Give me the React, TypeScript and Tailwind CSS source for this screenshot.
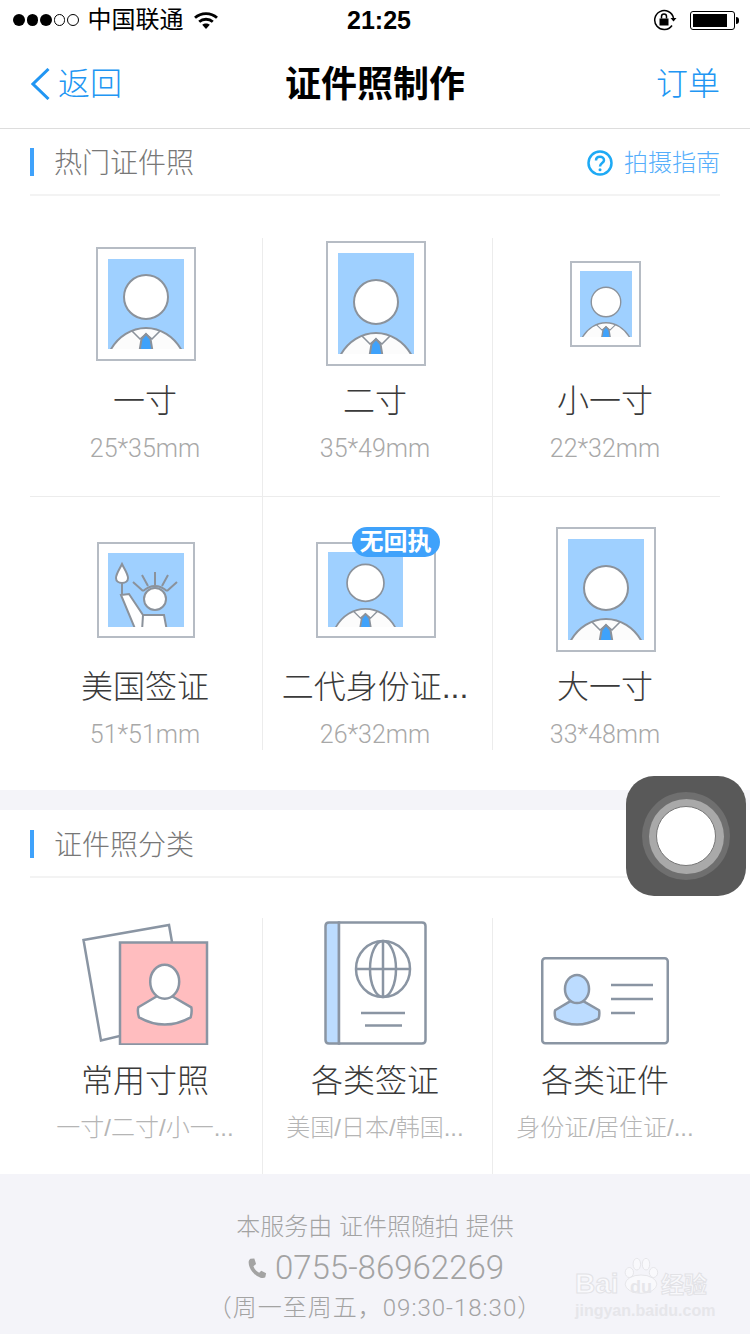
const STROKE = "#8b929b";
const ICON = "#8a95a3";
const CJK_ROBOTO = "[font-family:'Roboto','Noto_Sans_CJK_SC',sans-serif]";

type Photo = {
  name: string;
  size: string;
  frameClass: string;
  blueClass: string;
  vh: number;
  scale: number;
  badge?: boolean;
};

const hotRows: Photo[][] = [
  [
    { name: "一寸", size: "25*35mm", frameClass: "w-[100px] h-[114px]", blueClass: "w-[76px] h-[90px]", vh: 90, scale: 1 },
    { name: "二寸", size: "35*49mm", frameClass: "w-[100px] h-[125px]", blueClass: "w-[76px] h-[101px]", vh: 101, scale: 1 },
    { name: "小一寸", size: "22*32mm", frameClass: "w-[71px] h-[86px] mr-[1px]", blueClass: "w-[52px] h-[66px]", vh: 96, scale: 0.98 },
  ],
  [
    { name: "美国签证", size: "51*51mm", frameClass: "w-[98px] h-[96px]", blueClass: "w-[76px] h-[74px]", vh: 74, scale: 1 },
    { name: "二代身份证...", size: "26*32mm", frameClass: "w-[120px] h-[96px] !justify-start pl-[10px]", blueClass: "w-[75px] h-[75px]", vh: 75, scale: 0.85, badge: true },
    { name: "大一寸", size: "33*48mm", frameClass: "w-[100px] h-[125px]", blueClass: "w-[76px] h-[101px]", vh: 101, scale: 1 },
  ],
];

function Person({ vh, scale }: { vh: number; scale: number }) {
  return (
    <svg viewBox={`0 0 76 ${vh}`} className="w-full h-full block">
      <g transform={`translate(38 ${vh}) scale(${scale})`} stroke={STROKE} strokeWidth="2">
        <circle cx="0" cy="-52" r="22" fill="#fff" />
        <path d="M-36 2C-28-13-14-21 0-21C14-21 28-13 36 2Z" fill="#fcfcfc" />
        <path d="M-14-18L-6-10L0-15L6-10L14-18" fill="none" strokeWidth="1.6" />
        <path d="M0-15L-4.5-10L-6.5 2L6.5 2L4.5-10Z" fill="#3fa2fb" />
      </g>
    </svg>
  );
}

function Statue() {
  return (
    <svg viewBox="0 0 76 74" className="w-full h-full block">
      <g stroke={STROKE} strokeWidth="2" fill="none">
        <path d="M14 11C11 17 8 21 8 25C8 28.500 11 30 14 30C17 30 20 28.500 20 25C20 21 17 17 14 11Z" fill="#fff" />
        <path d="M14 30V41" />
        <path d="M13 42L21 41L35 62L56 62L59 78L28 78Z" fill="#fff" />
        <path d="M35 62L34 78" />
        <circle cx="47" cy="46" r="11" fill="#fff" />
        <path d="M47 19V32M34 22L40 33M60 22L54 33M25 29L35 38M69 29L59 38M35 38Q47 28 59 38" />
      </g>
    </svg>
  );
}

function PhotoCell({ item, pad, border }: { item: Photo; pad: string; border: string }) {
  return (
    <div className={`flex flex-col items-center ${pad} ${border}`}>
      <div className="h-[125px] flex items-center justify-center">
        <div className={`relative flex items-center justify-center border-[2.5px] border-[#b6bcc4] bg-white ${item.frameClass}`}>
          <div className={`bg-[#9fd0ff] overflow-hidden ${item.blueClass}`}>
            {item.name === "美国签证" ? <Statue /> : <Person vh={item.vh} scale={item.scale} />}
          </div>
          {item.badge && (
            <span className="absolute left-[33.500px] top-[-16.500px] w-[88px] h-[30px] rounded-full bg-[#3fa2fb] text-white text-[24px] font-bold leading-[30px] text-center">
              无回执
            </span>
          )}
        </div>
      </div>
      <p className="mt-[13px] pr-[2px] h-[44px] text-[32px] leading-[44px] text-[#3a3a3a] font-light whitespace-nowrap">{item.name}</p>
      <p className="mt-[9px] pr-[2px] h-[32px] text-[25px] leading-[34px] text-[#a8a8a8] font-light [font-family:'Roboto',sans-serif]">{item.size}</p>
    </div>
  );
}

function Bust({ x, y, s, fill }: { x: number; y: number; s: number; fill: string }) {
  return (
    <g transform={`translate(${x} ${y}) scale(${s})`} stroke={ICON} strokeWidth={2.500 / s} strokeLinejoin="round">
      <path d="M-7.400 14.300L-26.400 25.600Q-27.500 30-25.700 35.600Q0 50 26 35.600Q27.500 30 26.600 25.600L7 14.300Z" fill={fill} />
      <ellipse cx="0" cy="0" rx="14.500" ry="17" fill={fill} />
    </g>
  );
}

function StackIcon() {
  return (
    <svg width="128" height="124" viewBox="0 -3 128 124" className="block ml-[2px]">
      <g stroke={ICON} strokeWidth="2.500">
        <path d="M1.500 16L87 1L90 18L38 112L19 116.500Z" fill="#fff" />
        <rect x="38" y="18.500" width="87" height="102" fill="#ffbdbf" />
      </g>
      <Bust x={82.700} y={57.700} s={1} fill="#fff" />
    </svg>
  );
}

function PassportIcon() {
  return (
    <svg width="103" height="124" viewBox="0 0 103 124" className="block">
      <g stroke={ICON} strokeWidth="2.500" fill="none">
        <path d="M15 1.500H5Q1.500 1.500 1.500 5V119Q1.500 122.500 5 122.500H15Z" fill="#bcdcff" />
        <path d="M15 1.500H98Q101.500 1.500 101.500 5V119Q101.500 122.500 98 122.500H15Z" fill="#fff" strokeWidth="2.500" />
        <ellipse cx="59" cy="48" rx="27" ry="28" />
        <ellipse cx="59" cy="48" rx="13" ry="28" />
        <path d="M59 20V76M32 48H86M37 92H81M41 104.500H78" />
      </g>
    </svg>
  );
}

function IdCardIcon() {
  return (
    <svg width="128" height="88" viewBox="0 0 128 88" className="block">
      <g stroke={ICON} strokeWidth="2.500" fill="none">
        <rect x="1.250" y="1.250" width="125.500" height="85" rx="3" fill="#fff" />
        <path d="M70 28H112M70 42H112M70 56H94" />
      </g>
      <Bust x={36} y={32} s={0.83} fill="#bcdcff" />
    </svg>
  );
}

const categories = [
  { name: "常用寸照", sub: "一寸/二寸/小一...", icon: <StackIcon /> },
  { name: "各类签证", sub: "美国/日本/韩国...", icon: <PassportIcon /> },
  { name: "各类证件", sub: "身份证/居住证/...", icon: <IdCardIcon /> },
];

const cols = "grid grid-cols-[233px_230px_227px] mx-[30px]";
const dividers = ["border-r border-[#ececec]", "border-r border-[#ececec] pr-[3px]", "pr-[1px]"];
const catDividers = ["border-r border-[#ececec] pr-[2px]", "border-r border-[#ececec] pr-[5px]", "pr-[3px]"];

function SectionHeader({ title, right, className }: { title: string; right?: boolean; className: string }) {
  return (
    <div className={`mx-[30px] border-b-2 border-[#f3f3f3] flex items-start justify-between ${className}`}>
      <div className="flex items-center h-[28px]">
        <span className="w-[4px] h-[28px] bg-[#3fa2fb]" />
        <span className="ml-[20px] mt-[3px] text-[28px] leading-[28px] text-[#777777] font-light">{title}</span>
      </div>
      {right && (
        <div className="flex items-center h-[28px] mt-[1px]">
          <svg width="26" height="26" viewBox="0 0 26 26" fill="none" stroke="#1eaaf5" className="block">
            <circle cx="13" cy="13" r="11.500" strokeWidth="2.500" />
            <path d="M9 10.500C9 8 10.800 6.800 13 6.800C15.200 6.800 17 8.200 17 10.200C17 13 13 13 13 16.500" strokeWidth="2.500" />
            <circle cx="13" cy="19.800" r="1.500" fill="#1eaaf5" stroke="none" />
          </svg>
          <span className="ml-[11px] text-[24px] leading-[28px] text-[#55aefb] font-light">拍摄指南</span>
        </div>
      )}
    </div>
  );
}

function StatusBar() {
  return (
    <div className="h-[40px] relative flex items-center justify-between pl-[13px] pr-[11px] text-black">
      <div className="flex items-center">
        <div className="flex gap-[2px]">
          {[1, 1, 1, 0, 0].map((on, i) => (
            <span key={i} className={on ? "w-[11.500px] h-[11.500px] rounded-full bg-black" : "w-[11.500px] h-[11.500px] rounded-full border border-black"} />
          ))}
        </div>
        <span className="ml-[9px] text-[24px] leading-[40px]">中国联通</span>
        <svg width="24" height="18" viewBox="0 0 24 18" className="ml-[10px] block">
          <path d="M12 18L8.200 13.800C10.300 12 13.700 12 15.800 13.800Z" />
          <path d="M1 6.800C7 1.200 17 1.200 23 6.800" fill="none" stroke="#000" strokeWidth="2.800" />
          <path d="M5.200 10.800C9 7.400 15 7.400 18.800 10.800" fill="none" stroke="#000" strokeWidth="2.800" />
        </svg>
      </div>
      <span className="absolute left-[347px] top-0 text-[25px] leading-[40px] font-bold [font-family:'Liberation_Sans',sans-serif]">21:25</span>
      <div className="flex items-center">
        <svg width="24" height="22" viewBox="0 0 24 22" fill="none" stroke="#000" className="block">
          <path d="M19 16.500A9.500 9.500 0 1 1 20.500 9" strokeWidth="1.500" />
          <path d="M17.500 9H23.500L20.500 12.500Z" fill="#000" stroke="none" />
          <rect x="6.500" y="9.500" width="9" height="7" fill="#000" stroke="none" />
          <path d="M8.500 9.500V7.500A2.500 2.500 0 0 1 13.500 7.500V9.500" strokeWidth="1.500" />
        </svg>
        <div className="ml-[13px] w-[45px] h-[19px] rounded-[3px] border border-black p-[2px]">
          <div className="w-[34px] h-full bg-black" />
        </div>
        <span className="ml-[1px] w-[3px] h-[7px] rounded-r-sm bg-black" />
      </div>
    </div>
  );
}

export default function App() {
  return (
    <div className="relative w-[750px] h-[1334px] overflow-hidden bg-white [font-family:'Liberation_Sans','Noto_Sans_CJK_SC',sans-serif]">
      <StatusBar />

      {/* Navbar */}
      <div className="relative h-[89px] border-b border-[#dddddd] flex items-center justify-between pl-[31px] pr-[30px]">
        <div className="flex items-center gap-[8px]">
          <svg width="19" height="32" viewBox="0 0 19 32" fill="none" stroke="#2196f3" strokeWidth="3" className="block">
            <path d="M17.500 1L2 16L17.500 31" />
          </svg>
          <span className="text-[32px] leading-[44px] text-[#2196f3] font-light">返回</span>
        </div>
        <span className="absolute left-0 right-0 top-[23px] text-center text-[36px] leading-[44px] font-bold text-black">证件照制作</span>
        <span className="text-[32px] leading-[44px] text-[#2196f3] font-light">订单</span>
      </div>

      <SectionHeader title="热门证件照" right className="h-[67px] pt-[19px]" />

      <div className="mt-[42px]">
        {hotRows.map((row, r) => (
          <div key={r} className={r === 0 ? `${cols} border-b border-[#ececec]` : cols}>
            {row.map((item, i) => (
              <PhotoCell key={item.name} item={item} pad={r === 0 ? "pt-[3px] pb-[32px]" : "pt-[30px]"} border={dividers[i]} />
            ))}
          </div>
        ))}
      </div>

      <div className="mt-[40px] h-[20px] bg-[#f4f4f9]" />

      <SectionHeader title="证件照分类" className="h-[68px] pt-[20px]" />

      <div className={`${cols} mt-[40px]`}>
        {categories.map((c, i) => (
          <div key={c.name} className={`flex flex-col items-center pt-[3px] pb-[30px] ${catDividers[i]}`}>
            <div className="h-[124px] flex items-end">{c.icon}</div>
            <p className="mt-[14px] h-[44px] text-[32px] leading-[44px] text-[#3a3a3a] font-light">{c.name}</p>
            <p className="mt-[9px] h-[32px] text-[24px] leading-[32px] text-[#b5b5b5] font-light whitespace-nowrap">{c.sub}</p>
          </div>
        ))}
      </div>

      {/* Footer */}
      <div className="h-[160px] bg-[#f4f4f9] flex flex-col items-center pt-[36px] text-[#a3a3a3]">
        <p className="h-[34px] text-[24px] leading-[34px] font-light">本服务由 证件照随拍 提供</p>
        <div className="mt-[4px] h-[40px] flex items-center gap-[8px]">
          <svg width="21" height="24" viewBox="0 0 24 24" fill="#a3a3a3" className="block">
            <path d="M5 1.500L9.500 1L11.500 7.500L8.500 10C9.500 13 12 16 15 17.500L17.500 15L23 18L22 22.500C21 23.500 19 23.800 16.500 23C9 20.500 3 12.500 3 5.500C3 3.800 3.800 2.500 5 1.500Z" />
          </svg>
          <span className="text-[33px] leading-[40px] font-light [font-family:'Roboto',sans-serif]">0755-86962269</span>
        </div>
        <p className={`mt-[3px] h-[34px] text-[24px] leading-[34px] tracking-[1px] font-light whitespace-nowrap ${CJK_ROBOTO}`}>（周一至周五，09:30-18:30）</p>
      </div>

      {/* Assistive touch button */}
      <div className="absolute left-[626px] top-[776px] w-[120px] h-[120px] rounded-[28px] bg-[#595959] flex items-center justify-center">
        <div className="w-[88px] h-[88px] rounded-full bg-[#6f6f6f] flex items-center justify-center">
          <div className="w-[75px] h-[75px] rounded-full bg-[#a9a9a9] flex items-center justify-center">
            <div className="w-[60px] h-[60px] rounded-full bg-white border border-[#777777]" />
          </div>
        </div>
      </div>

      {/* Watermark */}
      <div className="absolute left-[575px] top-[1253px] w-[135px] h-[66px] text-[#f9f9fc]">
        <div className="absolute left-0 top-[15px] text-[28px] leading-[32px] font-bold [-webkit-text-stroke:1px_#e2e2e6]">Bai</div>
        <svg width="40" height="44" viewBox="0 0 48 44" fill="#f9f9fc" stroke="#e2e2e6" className="absolute left-[46px] top-0 block">
          <ellipse cx="10" cy="19" rx="5" ry="6" />
          <ellipse cx="19" cy="9" rx="4.500" ry="7" />
          <ellipse cx="30" cy="9" rx="4.500" ry="7" />
          <ellipse cx="39" cy="19" rx="5" ry="6" />
          <ellipse cx="24" cy="33" rx="19" ry="11" />
        </svg>
        <div className="absolute left-[55px] top-[23px] text-[18px] leading-[22px] font-bold text-[#e6e6ea]">du</div>
        <div className="absolute left-[86px] top-[18px] text-[23px] leading-[28px] font-bold [-webkit-text-stroke:1px_#e2e2e6]">经验</div>
        <div className="absolute left-0 top-[49px] text-[16px] leading-[18px] font-bold whitespace-nowrap text-[#e6e6ea]">jingyan.baidu.com</div>
      </div>
    </div>
  );
}
